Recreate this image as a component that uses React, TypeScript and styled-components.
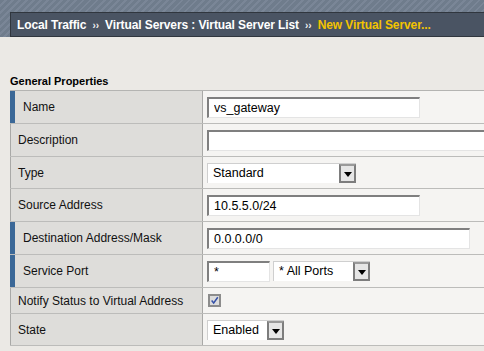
import styled, { createGlobalStyle } from 'styled-components';

const GlobalStyle = createGlobalStyle`
  html, body {
    margin: 0;
    padding: 0;
    background: #ebe9e5;
    font-family: "Liberation Sans", Arial, sans-serif;
    overflow: hidden;
  }
`;

type Field = {
    label: string;
    required?: boolean;
    height: number;
    control: React.ReactNode;
};

const App = () => {

    const fields: Field[] = [
        { label: 'Name', required: true, height: 33, control: <TextBox width={213} defaultValue="vs_gateway" /> },
        { label: 'Description', height: 33, control: <TextBox width={320} defaultValue="" /> },
        { label: 'Type', height: 32, control: <Dropdown width={149} value="Standard" /> },
        { label: 'Source Address', height: 33, control: <TextBox width={213} defaultValue="10.5.5.0/24" /> },
        { label: 'Destination Address/Mask', required: true, height: 33, control: <TextBox width={263} defaultValue="0.0.0.0/0" /> },
        {
            label: 'Service Port', required: true, height: 33, control: (
                <Inline>
                    <TextBox width={63} defaultValue="*" />
                    <Dropdown width={97} value="* All Ports" />
                </Inline>
            )
        },
        { label: 'Notify Status to Virtual Address', height: 26, control: <CheckBox /> },
        { label: 'State', height: 32, control: <Dropdown width={77} value="Enabled" /> },
    ];

    return (
        <>
            <GlobalStyle />
            <Header>
                <Breadcrumb>
                    <Crumb>Local Traffic</Crumb>
                    <Sep>››</Sep>
                    <Crumb>Virtual Servers : Virtual Server List</Crumb>
                    <Sep>››</Sep>
                    <Crumb $current>New Virtual Server...</Crumb>
                </Breadcrumb>
            </Header>
            <Content>
                <SectionTitle>General Properties</SectionTitle>
                <PropertyTable>
                    {fields.map((f) => (
                        <Row key={f.label} $height={f.height}>
                            <Label $required={f.required}>{f.label}</Label>
                            <Value>{f.control}</Value>
                        </Row>
                    ))}
                </PropertyTable>
            </Content>
        </>
    );
}

export default App;

const Dropdown = ({ width, value }: { width: number; value: string }) => (
    <SelectBox $width={width}>
        <SelectText>{value}</SelectText>
        <SelectButton>
            <svg width="8" height="5" viewBox="0 0 8 5"><path d="M0 0h8L4 5z" fill="#000" /></svg>
        </SelectButton>
    </SelectBox>
);

const CheckBox = () => (
    <Check>
        <svg width="11" height="11" viewBox="0 0 11 11">
            <path d="M2 5.5l2.5 3L9.5 1.5" stroke="#3450a8" strokeWidth="1.8" fill="none" />
        </svg>
    </Check>
);

const Header = styled.header`
  height: 37px;
  padding-top: 12px;
  padding-left: 10px;
  box-sizing: border-box;
  overflow: hidden;
  background: repeating-linear-gradient(135deg, #6f7c8c 0px, #6f7c8c 3px, #7a8697 3px, #7a8697 5px);
`;

const Breadcrumb = styled.nav`
  height: 25px;
  width: calc(100% + 10px);
  box-sizing: border-box;
  border: 1px solid #30363e;
  background: #4a5463;
  display: flex;
  align-items: center;
  gap: 6px;
  padding-left: 6px;
`;

const Crumb = styled.span<{ $current?: boolean }>`
  color: ${({ $current }) => ($current ? '#f3c300' : '#ffffff')};
  font-size: 12px;
  font-weight: bold;
  white-space: nowrap;
  letter-spacing: -0.1px;
`;

const Sep = styled.span`
  color: #f0f0f0;
  font-size: 10px;
  font-weight: bold;
  margin-top: 2px;
`;

const Content = styled.main`
  padding-left: 10px;
  overflow: hidden;
`;

const SectionTitle = styled.h2`
  margin: 37px 0 2px;
  font-size: 11px;
  line-height: 14px;
  font-weight: bold;
  color: #000;
`;

const PropertyTable = styled.div`
  width: calc(100% + 10px);
  border-top: 1px solid #b4b4b2;
`;

const Row = styled.div<{ $height: number }>`
  display: grid;
  grid-template-columns: 192px 1fr;
  height: ${({ $height }) => $height}px;
  box-sizing: border-box;
  border-bottom: 1px solid #bcbcba;
`;

const Label = styled.div<{ $required?: boolean }>`
  display: flex;
  align-items: center;
  background: #dedddA;
  border-left: ${({ $required }) => ($required ? '5px solid #3b6897' : '1px solid #a9a9a7')};
  padding-left: ${({ $required }) => ($required ? 8 : 7)}px;
  font-size: 12px;
  color: #111;
  white-space: nowrap;
`;

const Value = styled.div`
  display: flex;
  align-items: center;
  overflow: hidden;
  background: #f5f4f2;
  border-left: 1px solid #a9a9a7;
  padding-left: 4px;
`;

const Inline = styled.div`
  display: flex;
  gap: 3px;
`;

const TextBox = styled.input.attrs({ type: 'text' })<{ width: number }>`
  width: ${({ width }) => width}px;
  flex-shrink: 0;
  height: 21px;
  box-sizing: border-box;
  border: none;
  border-top: 2px solid #7f7f7f;
  border-left: 2px solid #7f7f7f;
  border-right: 1px solid #e4e4e4;
  border-bottom: 1px solid #e4e4e4;
  background: #fff;
  padding: 0 0 0 5px;
  font-family: "Liberation Sans", Arial, sans-serif;
  font-size: 12.5px;
  color: #000;
  outline: none;
`;

const SelectBox = styled.div<{ $width: number }>`
  width: ${({ $width }) => $width}px;
  height: 20px;
  box-sizing: border-box;
  display: flex;
  background: #fff;
  border-top: 1px solid #cfcfcf;
  border-left: 1px solid #cfcfcf;
`;

const SelectText = styled.span`
  flex: 1;
  display: flex;
  align-items: center;
  padding-left: 5px;
  font-size: 12.5px;
  color: #000;
  white-space: nowrap;
`;

const SelectButton = styled.span`
  width: 17px;
  height: 19px;
  box-sizing: border-box;
  display: flex;
  align-items: center;
  justify-content: center;
  border: 2px solid #7d7d7d;
  border-top-color: #9a9a9a;
  background: #e6e6e6;
  padding-top: 2px;
`;

const Check = styled.span`
  width: 13px;
  height: 13px;
  box-sizing: border-box;
  margin-left: 1px;
  display: flex;
  align-items: center;
  justify-content: center;
  border: 2px solid #8c8c8c;
  background: #dcdcdc;
`;
